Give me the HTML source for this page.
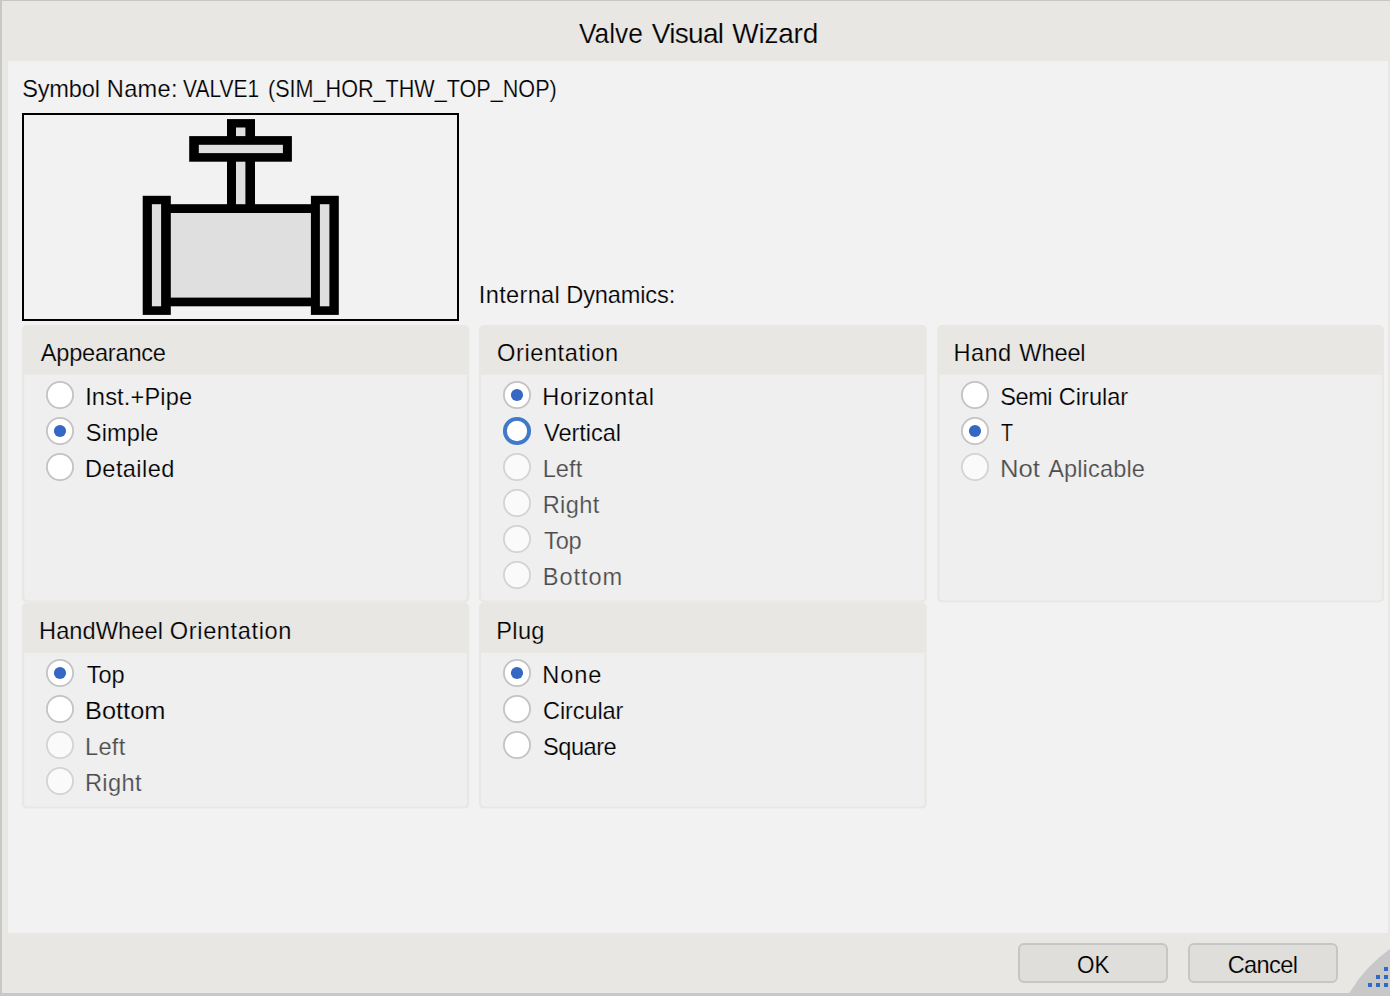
<!DOCTYPE html><html><head><meta charset="utf-8"><title>Valve Visual Wizard</title><style>
html,body{margin:0;padding:0}
body{width:1390px;height:996px;position:relative;overflow:hidden;background:#e9e7e3;font-family:"Liberation Sans",sans-serif;}
.a{position:absolute}
.t{position:absolute;left:0;white-space:nowrap;line-height:1;margin:0;padding:0}
.t span{position:absolute;top:0;display:block;transform-origin:0 0}
.btn{position:absolute;box-sizing:border-box;width:150px;height:40px;border:2px solid #c6c6c6;border-radius:6px;background:#dfdedb}
</style></head><body>
<div class="a" style="left:8px;top:61px;width:1380px;height:872px;background:#f2f2f2"></div>
<div class="a" style="left:0;top:0;width:1390px;height:1px;background:#c7c7c7"></div>
<div class="a" style="left:0;top:0;width:2px;height:996px;background:#c7c7c7"></div>
<svg class="a" style="left:1340px;top:940px" width="50" height="56" viewBox="1340 940 50 56"><path d="M1349.3 993 Q1365.4 966.2 1390 949 L1390 996 L1349 996 Z" fill="#c8c8c8"/>
<g fill="#2f6bc6"><rect x="1384" y="967" width="4" height="4"/><rect x="1376" y="975" width="4" height="4"/><rect x="1384" y="975" width="4" height="4"/><rect x="1368" y="983" width="4" height="4"/><rect x="1376" y="983" width="4" height="4"/><rect x="1384" y="983" width="4" height="4"/></g></svg>
<div class="a" style="left:0;top:993px;width:1390px;height:3px;background:#c8c8c8"></div>
<div class="a" style="left:22px;top:113px;width:437px;height:208px;box-sizing:border-box;border:2px solid #000;background:#f2f2f2"></div>
<svg class="a" style="left:22px;top:113px" width="437" height="208" viewBox="22 113 437 208">
<g fill="#000">
<rect x="227" y="119.1" width="28" height="90"/>
<rect x="189.2" y="136.1" width="102.7" height="25.6"/>
<rect x="165" y="204.2" width="150" height="102.1"/>
<rect x="142.7" y="195.8" width="28.1" height="119.1"/>
<rect x="310.9" y="195.8" width="27.9" height="119.1"/>
</g>
<g fill="#dfdfdf">
<rect x="236" y="127.5" width="9.4" height="8.6"/>
<rect x="236" y="161.7" width="9.4" height="42.5"/>
<rect x="198.8" y="144.8" width="84.1" height="8.3"/>
<rect x="170.8" y="213" width="140.1" height="84.6"/>
<rect x="151.9" y="204.2" width="9.2" height="102.1"/>
<rect x="319.9" y="204.2" width="9.5" height="102.1"/>
</g></svg>
<svg class="a" style="left:0;top:0" width="1390" height="996" viewBox="0 0 1390 996">
<rect x="22" y="325" width="447.20" height="277.45" rx="5" ry="5" fill="#e9e7e3"/>
<path d="M24.20 374.75 H467.00 V596.45 Q467.00 600.45 463.00 600.45 H28.20 Q24.20 600.45 24.20 596.45 Z" fill="#efefef"/>
<rect x="478.9" y="325" width="447.90" height="277.45" rx="5" ry="5" fill="#e9e7e3"/>
<path d="M481.10 374.75 H924.60 V596.45 Q924.60 600.45 920.60 600.45 H485.10 Q481.10 600.45 481.10 596.45 Z" fill="#efefef"/>
<rect x="937.2" y="325" width="446.80" height="277.45" rx="5" ry="5" fill="#e9e7e3"/>
<path d="M939.40 374.75 H1381.80 V596.45 Q1381.80 600.45 1377.80 600.45 H943.40 Q939.40 600.45 939.40 596.45 Z" fill="#efefef"/>
<rect x="22" y="602.55" width="447.20" height="206.05" rx="5" ry="5" fill="#e9e7e3"/>
<path d="M24.20 652.80 H467.00 V802.60 Q467.00 806.60 463.00 806.60 H28.20 Q24.20 806.60 24.20 802.60 Z" fill="#efefef"/>
<rect x="478.9" y="602.55" width="447.90" height="206.05" rx="5" ry="5" fill="#e9e7e3"/>
<path d="M481.10 652.80 H924.60 V802.60 Q924.60 806.60 920.60 806.60 H485.10 Q481.10 806.60 481.10 802.60 Z" fill="#efefef"/>
</svg>
<svg class="a" style="left:0;top:0" width="1390" height="996" viewBox="0 0 1390 996">
<circle cx="60" cy="395" r="13.1" fill="#fff" stroke="#c3c3c3" stroke-width="1.8"/>
<circle cx="60" cy="431" r="13.1" fill="#fff" stroke="#c3c3c3" stroke-width="1.8"/>
<circle cx="60" cy="431" r="6.1" fill="#3468c4"/>
<circle cx="60" cy="467" r="13.1" fill="#fff" stroke="#c3c3c3" stroke-width="1.8"/>
<circle cx="517" cy="395" r="13.1" fill="#fff" stroke="#c3c3c3" stroke-width="1.8"/>
<circle cx="517" cy="395" r="6.1" fill="#3468c4"/>
<circle cx="517" cy="431" r="12.1" fill="#fff" stroke="#3f79c8" stroke-width="3.9"/>
<circle cx="517" cy="467" r="13.1" fill="#fafafa" stroke="#d3d3d3" stroke-width="1.8"/>
<circle cx="517" cy="503" r="13.1" fill="#fafafa" stroke="#d3d3d3" stroke-width="1.8"/>
<circle cx="517" cy="539" r="13.1" fill="#fafafa" stroke="#d3d3d3" stroke-width="1.8"/>
<circle cx="517" cy="575" r="13.1" fill="#fafafa" stroke="#d3d3d3" stroke-width="1.8"/>
<circle cx="975" cy="395" r="13.1" fill="#fff" stroke="#c3c3c3" stroke-width="1.8"/>
<circle cx="975" cy="431" r="13.1" fill="#fff" stroke="#c3c3c3" stroke-width="1.8"/>
<circle cx="975" cy="431" r="6.1" fill="#3468c4"/>
<circle cx="975" cy="467" r="13.1" fill="#fafafa" stroke="#d3d3d3" stroke-width="1.8"/>
<circle cx="60" cy="673" r="13.1" fill="#fff" stroke="#c3c3c3" stroke-width="1.8"/>
<circle cx="60" cy="673" r="6.1" fill="#3468c4"/>
<circle cx="60" cy="709" r="13.1" fill="#fff" stroke="#c3c3c3" stroke-width="1.8"/>
<circle cx="60" cy="745" r="13.1" fill="#fafafa" stroke="#d3d3d3" stroke-width="1.8"/>
<circle cx="60" cy="781" r="13.1" fill="#fafafa" stroke="#d3d3d3" stroke-width="1.8"/>
<circle cx="517" cy="673" r="13.1" fill="#fff" stroke="#c3c3c3" stroke-width="1.8"/>
<circle cx="517" cy="673" r="6.1" fill="#3468c4"/>
<circle cx="517" cy="709" r="13.1" fill="#fff" stroke="#c3c3c3" stroke-width="1.8"/>
<circle cx="517" cy="745" r="13.1" fill="#fff" stroke="#c3c3c3" stroke-width="1.8"/>
</svg>
<div class="btn" style="left:1018px;top:943px"></div>
<div class="btn" style="left:1188px;top:943px"></div>
<div class="t" style="top:19.60px;font-size:28.0px;color:#000;-webkit-text-stroke:0.2px #e9e7e3"><span style="left:579.13px;transform:scaleX(0.9399);">Valve</span> <span style="left:651.73px;letter-spacing:-0.696px;">Visual</span> <span style="left:732.24px;letter-spacing:-0.216px;">Wizard</span></div>
<div class="t" style="top:77.92px;font-size:23.6px;color:#000;-webkit-text-stroke:0.2px #f2f2f2"><span style="left:22.13px;letter-spacing:-0.172px;">Symbol</span> <span style="left:106.85px;letter-spacing:0.293px;">Name:</span> <span style="left:182.83px;transform:scaleX(0.8878);">VALVE1</span> <span style="left:267.79px;transform:scaleX(0.9152);">(SIM_HOR_THW_TOP_NOP)</span></div>
<div class="t" style="top:284.12px;font-size:23.6px;color:#000;-webkit-text-stroke:0.2px #f2f2f2"><span style="left:478.86px;letter-spacing:0.313px;">Internal</span> <span style="left:566.25px;letter-spacing:-0.149px;">Dynamics:</span></div>
<div class="t" style="top:342.12px;font-size:23.6px;color:#000;-webkit-text-stroke:0.2px #e9e7e3"><span style="left:40.74px;letter-spacing:-0.223px;">Appearance</span></div>
<div class="t" style="top:342.12px;font-size:23.6px;color:#000;-webkit-text-stroke:0.2px #e9e7e3"><span style="left:497.07px;letter-spacing:0.570px;">Orientation</span></div>
<div class="t" style="top:342.12px;font-size:23.6px;color:#000;-webkit-text-stroke:0.2px #e9e7e3"><span style="left:953.55px;letter-spacing:0.427px;">Hand</span> <span style="left:1019.34px;letter-spacing:-0.147px;">Wheel</span></div>
<div class="t" style="top:619.62px;font-size:23.6px;color:#000;-webkit-text-stroke:0.2px #e9e7e3"><span style="left:39.05px;letter-spacing:0.081px;">HandWheel</span> <span style="left:169.87px;letter-spacing:0.609px;">Orientation</span></div>
<div class="t" style="top:619.62px;font-size:23.6px;color:#000;-webkit-text-stroke:0.2px #e9e7e3"><span style="left:496.25px;letter-spacing:0.339px;">Plug</span></div>
<div class="t" style="top:386.02px;font-size:23.6px;color:#000;-webkit-text-stroke:0.2px #efefef"><span style="left:85.16px;letter-spacing:0.151px;">Inst.+Pipe</span></div>
<div class="t" style="top:422.02px;font-size:23.6px;color:#000;-webkit-text-stroke:0.2px #efefef"><span style="left:85.83px;letter-spacing:0.085px;">Simple</span></div>
<div class="t" style="top:458.02px;font-size:23.6px;color:#000;-webkit-text-stroke:0.2px #efefef"><span style="left:84.95px;letter-spacing:0.395px;">Detailed</span></div>
<div class="t" style="top:386.02px;font-size:23.6px;color:#000;-webkit-text-stroke:0.2px #efefef"><span style="left:542.25px;letter-spacing:0.605px;">Horizontal</span></div>
<div class="t" style="top:422.02px;font-size:23.6px;color:#000;-webkit-text-stroke:0.2px #efefef"><span style="left:544.03px;letter-spacing:-0.062px;">Vertical</span></div>
<div class="t" style="top:458.02px;font-size:23.6px;color:#4c4c4c;-webkit-text-stroke:0.2px #efefef"><span style="left:542.65px;letter-spacing:0.099px;">Left</span></div>
<div class="t" style="top:494.02px;font-size:23.6px;color:#4c4c4c;-webkit-text-stroke:0.2px #efefef"><span style="left:542.65px;letter-spacing:0.375px;">Right</span></div>
<div class="t" style="top:530.02px;font-size:23.6px;color:#4c4c4c;-webkit-text-stroke:0.2px #efefef"><span style="left:544.00px;letter-spacing:-0.169px;">Top</span></div>
<div class="t" style="top:566.02px;font-size:23.6px;color:#4c4c4c;-webkit-text-stroke:0.2px #efefef"><span style="left:542.75px;letter-spacing:0.952px;">Bottom</span></div>
<div class="t" style="top:386.02px;font-size:23.6px;color:#000;-webkit-text-stroke:0.2px #efefef"><span style="left:1000.33px;letter-spacing:-0.514px;">Semi</span> <span style="left:1058.84px;letter-spacing:-0.023px;">Cirular</span></div>
<div class="t" style="top:422.02px;font-size:23.6px;color:#000;-webkit-text-stroke:0.2px #efefef"><span style="left:1001.00px;transform:scaleX(0.8358);">T</span></div>
<div class="t" style="top:458.02px;font-size:23.6px;color:#4c4c4c;-webkit-text-stroke:0.2px #efefef"><span style="left:999.68px;transform:scaleX(1.089);">Not</span> <span style="left:1048.14px;letter-spacing:0.127px;">Aplicable</span></div>
<div class="t" style="top:663.52px;font-size:23.6px;color:#000;-webkit-text-stroke:0.2px #efefef"><span style="left:86.80px;letter-spacing:-0.169px;">Top</span></div>
<div class="t" style="top:699.52px;font-size:23.6px;color:#000;-webkit-text-stroke:0.2px #efefef"><span style="left:84.81px;transform:scaleX(1.0757);">Bottom</span></div>
<div class="t" style="top:735.52px;font-size:23.6px;color:#4c4c4c;-webkit-text-stroke:0.2px #efefef"><span style="left:84.95px;letter-spacing:0.332px;">Left</span></div>
<div class="t" style="top:771.52px;font-size:23.6px;color:#4c4c4c;-webkit-text-stroke:0.2px #efefef"><span style="left:84.95px;letter-spacing:0.375px;">Right</span></div>
<div class="t" style="top:663.52px;font-size:23.6px;color:#000;-webkit-text-stroke:0.2px #efefef"><span style="left:542.35px;letter-spacing:0.916px;">None</span></div>
<div class="t" style="top:699.52px;font-size:23.6px;color:#000;-webkit-text-stroke:0.2px #efefef"><span style="left:543.04px;letter-spacing:-0.136px;">Circular</span></div>
<div class="t" style="top:735.52px;font-size:23.6px;color:#000;-webkit-text-stroke:0.2px #efefef"><span style="left:543.03px;letter-spacing:-0.491px;">Square</span></div>
<div class="t" style="top:954.02px;font-size:23.6px;color:#000;-webkit-text-stroke:0.2px #dfdedb"><span style="left:1076.81px;transform:scaleX(0.9524);">OK</span></div>
<div class="t" style="top:954.02px;font-size:23.6px;color:#000;-webkit-text-stroke:0.2px #dfdedb"><span style="left:1227.64px;letter-spacing:-0.603px;">Cancel</span></div>
</body></html>
